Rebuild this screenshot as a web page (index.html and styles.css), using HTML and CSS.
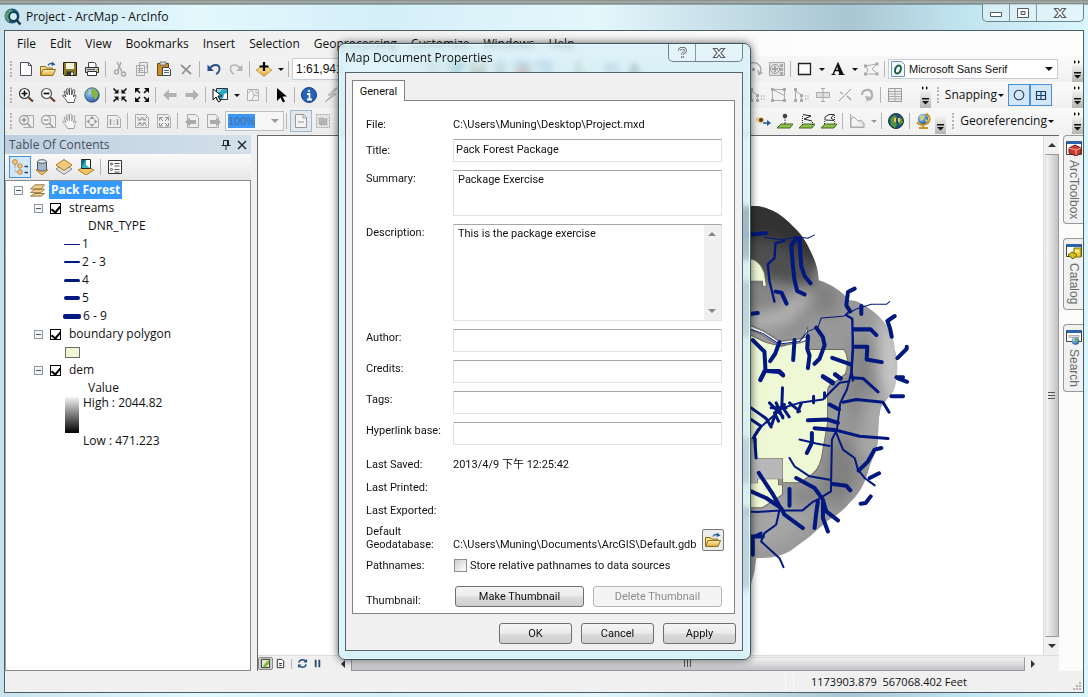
FILE: index.html
```html
<!DOCTYPE html>
<html lang="en">
<head>
<meta charset="utf-8">
<title>Project - ArcMap - ArcInfo</title>
<link rel="stylesheet" href="styles.css">
</head>
<body>
<svg class="sprite" aria-hidden="true">
  <defs>
    <linearGradient id="gold" x1="0" y1="0" x2="0" y2="1"><stop offset="0" stop-color="#fff0b0"/><stop offset="1" stop-color="#dfa93a"/></linearGradient>
    <radialGradient id="ocean" cx=".35" cy=".3" r=".8"><stop offset="0" stop-color="#a8d8ff"/><stop offset="1" stop-color="#1b4c9c"/></radialGradient>
  </defs>
  <symbol id="new" viewBox="0 0 16 16"><path d="M2.500 1.500h8l3 3v10h-11z" fill="#fff" stroke="#4a4f63"/><path d="M10.500 1.500v3h3" fill="none" stroke="#4a4f63"/></symbol>
  <symbol id="open" viewBox="0 0 16 16"><path d="M.5 14V5.500h5l1 1.500h6v2" fill="#f4dc82" stroke="#8b6d1b"/><path d="M.5 14.500l2.500-6h12.500l-2.500 6z" fill="url(#gold)" stroke="#8b6d1b"/><path d="M8 4.500c1-2 3-2.500 5-1.500" fill="none" stroke="#245f96" stroke-width="1.500"/><path d="M12 .5l3.500 3-4 1.500z" fill="#245f96"/></symbol>
  <symbol id="save" viewBox="0 0 16 16"><path d="M1.500 1.500h13v13h-12l-1-1z" fill="#8c7c28" stroke="#2a2508"/><path d="M4 2h8v6H4z" fill="#f3f1df"/><path d="M4.500 10.500h7v4h-7z" fill="#333"/><path d="M9 11.500h2v2.500H9z" fill="#eee"/></symbol>
  <symbol id="print" viewBox="0 0 16 16"><path d="M4.500 6V1.500h6l1.500 1.500v3" fill="#fff" stroke="#444"/><path d="M1.500 6.500h13v5h-13z" fill="#cfcfcf" stroke="#333"/><path d="M3.500 10.500h9v4h-9z" fill="#fff" stroke="#333"/><path d="M3 8.500h8" stroke="#555"/><path d="M12 8h1.500v1.500H12z" fill="#c9a400"/></symbol>
  <symbol id="cut" viewBox="0 0 16 16"><path d="M5 1l5 10M9 1L6 9" fill="none" stroke="#a9a9a9" stroke-width="1.500"/><circle cx="4.500" cy="11" r="2" fill="none" stroke="#a9a9a9" stroke-width="1.500"/><circle cx="11.500" cy="13" r="2" fill="none" stroke="#a9a9a9" stroke-width="1.500"/></symbol>
  <symbol id="copy" viewBox="0 0 16 16"><path d="M5.500 1.500h8v10h-8zM2.500 4.500h8v10h-8z" fill="#ececec" stroke="#a5a5a5"/><path d="M4 7.500h5M4 9.500h5M4 11.500h5M12 4.500h1M12 6.500h1" stroke="#a5a5a5"/></symbol>
  <symbol id="paste" viewBox="0 0 16 16"><path d="M1.500 2.500h11v12h-11z" fill="#c98d2b" stroke="#6d4811"/><path d="M4 1h6v3H4z" fill="#d9d9d9" stroke="#555" stroke-width=".7"/><path d="M6.500 6.500h6l2 2v6h-8z" fill="#fff" stroke="#345"/><path d="M8 9.500h5M8 11.500h5" stroke="#567"/></symbol>
  <symbol id="del" viewBox="0 0 16 16"><path d="M3 4l10 9M12.500 4L4 13" stroke="#8f8f8f" stroke-width="1.700"/></symbol>
  <symbol id="undo" viewBox="0 0 16 16"><path d="M4 7c3-4 9-4 9.500 0 .3 3-1.500 5-3.500 6" fill="none" stroke="#2b4d8b" stroke-width="1.800"/><path d="M1.500 3.500V10H8z" fill="#2b4d8b"/></symbol>
  <symbol id="redo" viewBox="0 0 16 16"><path d="M12 7c-3-4-9-4-9.500 0-.3 3 1.500 5 3.500 6" fill="none" stroke="#b5b5b5" stroke-width="1.500"/><path d="M14.500 3.500V10H8z" fill="#b5b5b5"/></symbol>
  <symbol id="add" viewBox="0 0 16 16"><path d="M0 9l8-5 8 5-8 6.500z" fill="url(#gold)" stroke="#b8812c" stroke-width=".7"/><path d="M8 1v9M3.500 5.500h9" stroke="#000" stroke-width="2.200"/></symbol>
  <symbol id="zin" viewBox="0 0 16 16"><circle cx="6.500" cy="6.500" r="5" fill="#fff" stroke="#333" stroke-width="1.200"/><path d="M3.500 6.500h6M6.500 3.500v6" stroke="#111" stroke-width="1.700"/><path d="M10.500 10.500l4.500 4" stroke="#6c3a22" stroke-width="2.200"/></symbol>
  <symbol id="zout" viewBox="0 0 16 16"><circle cx="6.500" cy="6.500" r="5" fill="#fff" stroke="#555" stroke-width="1.200"/><path d="M3.500 6.500h6" stroke="#111" stroke-width="1.700"/><path d="M10.500 10.500l4.500 4" stroke="#6c3a22" stroke-width="2.200"/></symbol>
  <symbol id="hand" viewBox="0 0 16 16"><path d="M5.500 15.500c-1-3-3.500-4.500-5-7 1-1 2.500 0 3.500 1.500L2 4.500c1-1 2 0 2.500 1.500l1 2-1-6c1-1 2 0 2.200 1l.8 5 0-6.500c1-1 2-.3 2.200 1v5.500l1.300-5c1-1 2 0 1.800 1.200l-1.300 5.800 1.500-2c1.500 0 1 1.500.5 2.500-1 1.500-1 3-1.500 5z" fill="#fff" stroke="#555"/></symbol>
  <symbol id="globe" viewBox="0 0 16 16"><circle cx="8" cy="8" r="7.300" fill="url(#ocean)" stroke="#1c3b66" stroke-width=".6"/><path d="M8 2c3-1 6 2 6.500 5-1 3-2 4-3 6-2-1-1-3-3-4-1.500-2-2-5-.5-7zM3 3l2 1-1 2-2 1z" fill="#86b43c"/></symbol>
  <symbol id="fixin" viewBox="0 0 16 16"><g stroke="#111" stroke-width="1.600"><path d="M1.500 1.500L5 5M14.500 1.500L11 5M1.500 14.500L5 11M14.500 14.500L11 11"/></g><path d="M6.500 2v4.500H2zM9.500 2v4.500H14zM6.500 14V9.500H2zM9.500 14V9.500H14z" fill="#111"/></symbol>
  <symbol id="fixout" viewBox="0 0 16 16"><g stroke="#111" stroke-width="1.600"><path d="M3 3l3 3M13 3l-3 3M3 13l3-3M13 13l-3-3"/></g><path d="M1 1h5L1 6zM15 1h-5l5 5zM1 15h5l-5-5zM15 15h-5l5-5z" fill="#111"/></symbol>
  <symbol id="left" viewBox="0 0 16 16"><path d="M1 8l6-5.500v3.500h7.500v4H7v3.500z" fill="#b2b2b2"/></symbol>
  <symbol id="right" viewBox="0 0 16 16"><path d="M15 8L9 2.500V6H1.500v4H9v3.500z" fill="#b2b2b2"/></symbol>
  <symbol id="selfeat" viewBox="0 0 16 16"><path d="M4.500 1.500h11v11h-11z" fill="#8fd6e6" stroke="#333"/><path d="M5 7l6-5h4v4l-5 6H5z" fill="#2ba9c4"/><path d="M12 7l3-1v6h-4z" fill="#f1f9fb"/><path d="M1 2v11l3-3 2.500 5 2-1-2.500-5h4z" fill="#fff" stroke="#111"/></symbol>
  <symbol id="clear" viewBox="0 0 16 16"><path d="M2.500 2.500h11v11h-11z" fill="#f3f3f3" stroke="#b1b1b1"/><path d="M3 6l4-3M7 3l2 5 4 1M9 8l-2 5M11 3v3h2" fill="none" stroke="#b1b1b1"/></symbol>
  <symbol id="arrow" viewBox="0 0 16 16"><path d="M4 1v13l3.500-3.500L10 15.500l2-1-2.500-5h4.500z" fill="#000"/></symbol>
  <symbol id="info" viewBox="0 0 16 16"><circle cx="8" cy="8" r="7.500" fill="#2463b8" stroke="#153f82"/><path d="M8 3v2M6 7h2.500v5M6 12.500h5" stroke="#fff" stroke-width="1.800" fill="none"/></symbol>
  <symbol id="bolt" viewBox="0 0 16 16"><path d="M13 1L5 8h4l-7 7 11-8H9l5-6z" fill="#ddd" stroke="#aaa"/></symbol>
  <symbol id="pgin" viewBox="0 0 16 16"><path d="M5.500 2.500h10v12h-10" fill="#eee" stroke="#a9a9a9"/><circle cx="6" cy="7" r="4.500" fill="#f5f5f5" stroke="#a2a2a2" stroke-width="1.300"/><path d="M3.500 7h5M6 4.500v5M9 10l4 4" stroke="#999" stroke-width="1.600"/></symbol>
  <symbol id="pgout" viewBox="0 0 16 16"><path d="M5.500 2.500h10v12h-10" fill="#eee" stroke="#a9a9a9"/><circle cx="6" cy="7" r="4.500" fill="#f5f5f5" stroke="#a2a2a2" stroke-width="1.300"/><path d="M3.500 7h5M9 10l4 4" stroke="#999" stroke-width="1.600"/></symbol>
  <symbol id="pgfull" viewBox="0 0 16 16"><path d="M1.500 2.500h10l3 3v9h-13z" fill="#eee" stroke="#a9a9a9"/><path d="M8 3l2.500 3h-5zM8 14l2.500-3h-5zM2.500 8.500l3-2.500v5zM13.500 8.500l-3-2.500v5z" fill="#999"/></symbol>
  <symbol id="pg1" viewBox="0 0 16 16"><path d="M1.500 2.500h10l3 3v9h-13z" fill="#eee" stroke="#a9a9a9"/><path d="M4.500 6v6M11.500 6v6M8 7.500v1M8 10.500v1" stroke="#999" stroke-width="1.400"/></symbol>
  <symbol id="pgfix" viewBox="0 0 16 16"><path d="M1.500 1.500h10l3 3v10h-13z" fill="#eee" stroke="#a9a9a9"/><path d="M3 4l3 3M13 4l-3 3M3 13l3-3M13 13l-3-3M4 7h3V4M12 7H9V4M4 10h3v3M12 10H9v3" fill="none" stroke="#8f8f8f"/></symbol>
  <symbol id="pgfix2" viewBox="0 0 16 16"><path d="M1.500 1.500h10l3 3v10h-13z" fill="#eee" stroke="#a9a9a9"/><path d="M4 5l3 3M12 5L9 8M4 13l3-3M12 13l-3-3M3.500 7.500v-3h3M12.500 7.500v-3h-3M3.500 10v3h3M12.500 10v3h-3" fill="none" stroke="#8f8f8f"/></symbol>
  <symbol id="pgleft" viewBox="0 0 16 16"><path d="M3.500 1.500h8l3 3v10h-11z" fill="#eee" stroke="#a9a9a9"/><path d="M1 9l5-4.500V7h6v4H6v2.500z" fill="#aaa"/></symbol>
  <symbol id="pgright" viewBox="0 0 16 16"><path d="M1.500 1.500h8l3 3v10h-11z" fill="#eee" stroke="#a9a9a9"/><path d="M15 9l-5-4.500V7H4v4h6v2.500z" fill="#aaa"/></symbol>
  <symbol id="pgdash" viewBox="0 0 16 16"><path d="M2.500 1.500h8l3 3v10h-11z" fill="#f4f4f4" stroke="#999"/><path d="M10 1.500v3.500h3.500M5 9h6" fill="none" stroke="#999"/></symbol>
  <symbol id="pggrid" viewBox="0 0 16 16"><path d="M1.500 1.500h13v13h-13z" fill="#e5e5e5" stroke="#a9a9a9" stroke-dasharray="2 1"/><path d="M4 5h5v6H4zM7 8l5-3v7H5z" fill="#bbb" stroke="#a5a5a5" stroke-width=".6"/></symbol>
  <symbol id="rot" viewBox="0 0 16 16"><path d="M2 3c4-3 11-1 12 5 0 2-1 4-2 5M11 9l1 4.500 3.500-2" fill="none" stroke="#a5a5a5" stroke-width="1.300"/><path d="M5 7h3v3H5z" fill="#aaa"/></symbol>
  <symbol id="center" viewBox="0 0 16 16"><path d="M.5 1.500h15v13H.5z" fill="#e3e3e3" stroke="#aaa"/><circle cx="6" cy="8" r="4.500" fill="none" stroke="#999"/><path d="M6 5v6M3 8h6" stroke="#999" stroke-width="1.500"/><path d="M11 3h3v3h-3zM11 7h3v3h-3zM11 11h3v3h-3z" fill="#aaa"/></symbol>
  <symbol id="rect" viewBox="0 0 16 16"><path d="M1.500 2.500h12v11h-12z" fill="#fafafa" stroke="#222" stroke-width="1.300"/></symbol>
  <symbol id="fontA" viewBox="0 0 16 16"><path d="M3 13.500L8 2.500l5 11M4.500 9.500h5" fill="none" stroke="#111" stroke-width="1.400"/><path d="M8 2l5 11.500h-3.500L7 5zM1.500 13h4v1h-4zM8.500 13h6v1h-6z" fill="#111"/></symbol>
  <symbol id="editv" viewBox="0 0 16 16"><path d="M2.500 5L14 3l-5 5 6 5H2.500L5 9z" fill="none" stroke="#aaa"/><path d="M1 3.500h3v3H1zM12.500 1.500h3v3h-3zM1 11.500h3v3H1zM12.500 11.500h3v3h-3z" fill="#aaa"/></symbol>
  <symbol id="fontO" viewBox="0 0 16 16"><path d="M1.500.5h10l3 3v12h-13z" fill="#f4f9ff" stroke="#6f8fbd"/><ellipse cx="8" cy="8.500" rx="2.700" ry="4.200" transform="rotate(22 8 8.500)" fill="none" stroke="#155f41" stroke-width="2"/></symbol>
  <symbol id="vert1" viewBox="0 0 16 16"><path d="M1.500 2.500v11h12v-5L1.500 2.500h12v6" fill="none" stroke="#aaa"/><path d="M0 1h3v3H0zM0 12h3v3H0zM12 12h3v3h-3zM12 1h3v3h-3z" fill="#aaa"/></symbol>
  <symbol id="vert2" viewBox="0 0 16 16"><path d="M2.500 2v12M2.500 4l6 4v6" fill="none" stroke="#aaa"/><path d="M1 1h3v3H1zM1 12h3v3H1zM7 7h3v3H7zM7 12h3v3H7z" fill="#aaa"/><path d="M12.500 8v6M15 8v6" stroke="#bbb" stroke-dasharray="2 1"/></symbol>
  <symbol id="cross1" viewBox="0 0 16 16"><path d="M1.500 5.500h13v5h-13zM8 1v14M6 1.500h4M6 14.500h4" fill="#e0e0e0" stroke="#aaa"/></symbol>
  <symbol id="cross2" viewBox="0 0 16 16"><path d="M2 14L14 2" stroke="#999"/><path d="M3 5l3 2M10 9l4 4" stroke="#aaa" stroke-width="1.500"/></symbol>
  <symbol id="rotate2" viewBox="0 0 16 16"><path d="M3 8c0-6 9-7 10-1 .5 3-1 5-3 6" fill="none" stroke="#b0b0b0" stroke-width="2.200"/><path d="M6 9l7 1-5 5z" fill="#b5b5b5"/></symbol>
  <symbol id="table" viewBox="0 0 16 16"><path d="M1.500 1.500h13v13h-13z" fill="#eee" stroke="#999"/><path d="M2 4.500h12M2 7h12M2 9.500h12M2 12h12M8 2v12" stroke="#aaa"/></symbol>
  <symbol id="ring" viewBox="0 0 16 16"><circle cx="8" cy="8" r="4.800" fill="none" stroke="#1f4468" stroke-width="1.100"/></symbol>
  <symbol id="gridico" viewBox="0 0 16 16"><path d="M3.500 4.500h9v8h-9zM8 4.500v8M3.500 8.500h9" fill="none" stroke="#183d66" stroke-width="1.200"/></symbol>
  <symbol id="eye" viewBox="0 0 16 16"><path d="M1 5l6-1 3 3-4 4-5-3z" fill="#ecc987"/><circle cx="6" cy="7" r="2" fill="#5a3a16"/><path d="M8 10h5" stroke="#1f5aa0" stroke-width="1.500"/><path d="M12 7l4 3-4 3z" fill="#1f5aa0"/></symbol>
  <symbol id="prof1" viewBox="0 0 16 16"><path d="M4 11h12l-3 4H0z" fill="#8fc04d" stroke="#466b1e"/><path d="M8 4v8" stroke="#333" stroke-dasharray="1.500 1"/><circle cx="8" cy="3" r="2.300" fill="#444"/></symbol>
  <symbol id="prof2" viewBox="0 0 16 16"><path d="M4 11h12l-3 4H0z" fill="#8fc04d" stroke="#466b1e"/><path d="M4 1.500L12 3 5 6l8 2" fill="none" stroke="#222"/><path d="M3.500 3v9M13.500 9v3" stroke="#222" stroke-dasharray="1 1"/></symbol>
  <symbol id="prof3" viewBox="0 0 16 16"><path d="M4 11h12l-3 4H0z" fill="#8fc04d" stroke="#466b1e"/><path d="M4 7V4l4-2.500h5L10 5l3 2.500z" fill="none" stroke="#333"/><path d="M3.500 8v4M13.500 2v10" stroke="#333" stroke-dasharray="1 1"/></symbol>
  <symbol id="area" viewBox="0 0 16 16"><path d="M1.500 1v13.500h14M2 6l3-2 4 4 3-1 3 3v4H2z" fill="#ddd" stroke="#aaa"/></symbol>
  <symbol id="earth" viewBox="0 0 16 16"><circle cx="8" cy="8" r="7.500" fill="#234f74" stroke="#16384f"/><path d="M2 6l4-4 3 2-2 4 2 3-2 4-4-3zM10 6l4-1 1 5-4 2z" fill="#55963d"/><path d="M6 5h2v4H6zM10 5h2v4h-2z" fill="#e8c85a"/></symbol>
  <symbol id="stand" viewBox="0 0 16 16"><circle cx="7" cy="6" r="5.200" fill="url(#ocean)"/><path d="M5 2l4 1-2 4-3 1zM9 6l3 1-2 3z" fill="#cdd76b"/><path d="M10 .5c6 4 4 11-3 11.500-3 0-5-1-6-3M7 12v2M3 15h9" fill="none" stroke="#c8901d" stroke-width="1.800"/></symbol>
  <symbol id="layers" viewBox="0 0 18 16"><path d="M1 15l5-3h11l-4 3zM1 11l5-4h11l-4 4zM1 7l5-5h11l-4 5z" fill="#efcd8c" stroke="#8d6e37"/></symbol>
  <symbol id="tree" viewBox="0 0 16 16"><path d="M3 4v9h5M3 7h5" fill="none" stroke="#999" stroke-dasharray="1 1"/><circle cx="3" cy="3" r="2.400" fill="#f1cd82" stroke="#b98738"/><circle cx="8" cy="7" r="2.200" fill="#f1cd82" stroke="#b98738"/><circle cx="8" cy="13" r="2.200" fill="#f1cd82" stroke="#b98738"/><path d="M12.500 7.500H16M12.500 13.500H16" stroke="#1c3d6d" stroke-width="1.500"/></symbol>
  <symbol id="source" viewBox="0 0 16 16"><path d="M2 11l6-3 6 3-6 5z" fill="#efc266" stroke="#b18028"/><path d="M3.500 2.500v8c1 2 8 2 9 0v-8z" fill="#a5b6c8" stroke="#4a5667"/><ellipse cx="8" cy="2.500" rx="4.500" ry="1.800" fill="#e6edf3" stroke="#4a5667"/></symbol>
  <symbol id="diamond" viewBox="0 0 16 16"><path d="M0 10l8-5 8 5-8 5.500z" fill="#ddd" stroke="#888"/><path d="M0 6l8-5.500L16 6l-8 5.500z" fill="#f1c979" stroke="#a8792f"/></symbol>
  <symbol id="selsrc" viewBox="0 0 16 16"><path d="M0 11l8-4 8 4-8 5z" fill="#efc266" stroke="#b18028"/><path d="M3.500.5h9v9h-9z" fill="#31b1cc" stroke="#222"/><path d="M8 1h4v8l-4-3z" fill="#fff"/><path d="M3 1v8l5-8z" fill="#176b83"/></symbol>
  <symbol id="opts" viewBox="0 0 16 16"><path d="M1.500 1.500h13v13h-13z" fill="#fff" stroke="#333"/><circle cx="4.500" cy="5" r="1" fill="none" stroke="#444"/><circle cx="4.500" cy="10.500" r="1" fill="none" stroke="#444"/><path d="M7.500 4.500h5M7.500 7h5M7.500 10.500h5M7.500 13h5" stroke="#555"/></symbol>
  <symbol id="pin" viewBox="0 0 10 10"><path d="M2.500.5h5v5h-5zM6.500 1v4M.5 5.500h9M5 6v4" fill="none" stroke="#222"/></symbol>
  <symbol id="x" viewBox="0 0 10 10"><path d="M1 1l8 8M9 1L1 9" stroke="#222" stroke-width="1.400"/></symbol>
  <symbol id="glassx" viewBox="0 0 14 12"><path d="M1.500 1.500h3.500l2 2.500 2-2.500h3.500L9 6l3.500 4.500H9L7 8l-2 2.500H1.500L5 6z" fill="#fff" stroke="#555b66" stroke-width="1.200"/></symbol>
  <symbol id="toolbox" viewBox="0 0 16 16"><path d="M.5 1.500h15v13H.5z" fill="#fff" stroke="#444"/><path d="M1 1h14v3H1z" fill="#2a62ad"/><path d="M3 8l6-3 6 3v5l-5 3-7-3z" fill="#c93b2c" stroke="#6d1710"/><path d="M3 8l7 2 5-2M10 10v5" fill="none" stroke="#f5aaa0"/></symbol>
  <symbol id="catalog" viewBox="0 0 16 16"><path d="M.5 1.500h15v12H.5z" fill="#fff" stroke="#444"/><path d="M1 1h14v3H1z" fill="#2a62ad"/><path d="M8 5h7v9H8z" fill="#ecd124" stroke="#7b6a0a"/><path d="M9 7h4v2H9z" fill="#fff7a6"/><path d="M2 12l4-3 5 3-4 4z" fill="#d9c11a" stroke="#6d5f07"/></symbol>
  <symbol id="search" viewBox="0 0 16 16"><path d="M.5 1.500h15v11H.5z" fill="#fff" stroke="#444"/><path d="M1 1h14v3H1z" fill="#2a62ad"/><path d="M3 6.500h10v2H3z" fill="#ddd" stroke="#888" stroke-width=".6"/><circle cx="9.500" cy="12" r="3.800" fill="url(#ocean)"/><path d="M9 9l3 1-1 4-2-2z" fill="#67b744"/></symbol>
  <symbol id="dataview" viewBox="0 0 12 12"><path d="M1.500 1.500h9v9h-9z" fill="#dfeecb" stroke="#222"/><path d="M3 9l5-6h2v3l-4 4z" fill="#83b343"/></symbol>
  <symbol id="layoutview" viewBox="0 0 12 12"><path d="M2.500 1.500h5l2 2v7h-7zM4.500 6h3M4.500 8h3" fill="#fff" stroke="#222"/></symbol>
  <symbol id="refresh" viewBox="0 0 12 12"><path d="M2 5c1-4 6-4 8-1M10 7c-1 4-6 4-8 1" fill="none" stroke="#1e4d86" stroke-width="1.500"/><path d="M11 1v4H7zM1 11V7h4z" fill="#1e4d86"/></symbol>
  <symbol id="pause" viewBox="0 0 12 12"><path d="M4 2v8M8 2v8" stroke="#2b4b78" stroke-width="2"/></symbol>
  <symbol id="chev" viewBox="0 0 9 20"><path d="M1 1l2 2-2 2zM5 1l2 2-2 2z" fill="#111"/><path d="M1 13h7v1.500H1zM1 16h7l-3.500 3.500z" fill="#111"/></symbol>
  <symbol id="chev1" viewBox="0 0 9 20"><path d="M1 13h7v1.500H1zM1 16h7l-3.500 3.500z" fill="#111"/></symbol>
</svg>

<div class="window">
  <header class="titlebar">
    <svg class="logo" viewBox="0 0 18 18"><circle cx="8" cy="8" r="7.500" fill="#1d5b78"/><path d="M1 5l5-4 3 2-3 4 1 5-3 2-3-4z" fill="#5a9c6f"/><circle cx="9.500" cy="8.500" r="4.300" fill="#d3eef5" stroke="#123a52" stroke-width="1.800"/><path d="M12.500 12l4 4.500" stroke="#123a52" stroke-width="2.500"/></svg>
    <h1 class="title">Project - ArcMap - ArcInfo</h1>
    <div class="caption-buttons">
      <button class="cap" aria-label="Minimize"><svg viewBox="0 0 14 12"><path d="M1.500 5.500h11v4h-11z" fill="#fff" stroke="#555b66"/></svg></button>
      <button class="cap" aria-label="Maximize"><svg viewBox="0 0 14 12"><path d="M1.500 1.500h11v9h-11z" fill="#fff" stroke="#555b66"/><path d="M5 4.500h4v3H5z" fill="#cfe4ee" stroke="#555b66"/></svg></button>
      <button class="cap cap-close" aria-label="Close"><svg><use href="#glassx"/></svg></button>
    </div>
  </header>

  <div class="client">
    <nav class="menubar">
      <button>File</button><button>Edit</button><button>View</button><button>Bookmarks</button><button>Insert</button><button>Selection</button><button>Geoprocessing</button><button>Customize</button><button>Windows</button><button>Help</button>
    </nav>

    <div class="toolbars">
      <div class="toolrow">
        <i class="grip"></i>
        <button class="tool" aria-label="New"><svg><use href="#new"/></svg></button>
        <button class="tool" aria-label="Open"><svg><use href="#open"/></svg></button>
        <button class="tool" aria-label="Save"><svg><use href="#save"/></svg></button>
        <button class="tool" aria-label="Print"><svg><use href="#print"/></svg></button>
        <i class="sep"></i>
        <button class="tool" aria-label="Cut"><svg><use href="#cut"/></svg></button>
        <button class="tool" aria-label="Copy"><svg><use href="#copy"/></svg></button>
        <button class="tool" aria-label="Paste"><svg><use href="#paste"/></svg></button>
        <button class="tool" aria-label="Delete"><svg><use href="#del"/></svg></button>
        <i class="sep"></i>
        <button class="tool" aria-label="Undo"><svg><use href="#undo"/></svg></button>
        <button class="tool" aria-label="Redo"><svg><use href="#redo"/></svg></button>
        <i class="sep"></i>
        <button class="tool" aria-label="Add data"><svg><use href="#add"/></svg></button>
        <button class="drop" aria-label="Add data options"></button>
        <i class="sep"></i>
        <input class="scale" aria-label="Map scale" value="1:61,941">
        <span class="mid">
          <svg><use href="#table"/></svg><svg><use href="#selfeat"/></svg><svg><use href="#save"/></svg><svg><use href="#source"/></svg><svg><use href="#toolbox"/></svg><svg><use href="#search"/></svg><i class="sep"></i><svg><use href="#prof1"/></svg><i class="sep"></i><svg><use href="#undo"/></svg><svg><use href="#fontA"/></svg>
        </span>
        <span class="right">
          <button class="tool" aria-label="Rotate"><svg><use href="#rot"/></svg></button>
          <button class="tool" aria-label="Zoom to selected"><svg><use href="#center"/></svg></button>
          <i class="sep"></i>
          <button class="tool" aria-label="Rectangle"><svg><use href="#rect"/></svg></button>
          <button class="drop" aria-label="Shapes"></button>
          <button class="tool" aria-label="Text"><svg><use href="#fontA"/></svg></button>
          <button class="drop" aria-label="Text tools"></button>
          <button class="tool" aria-label="Edit vertices"><svg><use href="#editv"/></svg></button>
          <i class="sep"></i>
          <span class="fontbox"><svg><use href="#fontO"/></svg><select aria-label="Font"><option>Microsoft Sans Serif</option></select><i class="caret"></i></span>
          <i class="tail"></i>
          <button class="more" aria-label="More"><svg><use href="#chev"/></svg></button>
        </span>
      </div>
      <div class="toolrow">
        <i class="grip"></i>
        <button class="tool" aria-label="Zoom in"><svg><use href="#zin"/></svg></button>
        <button class="tool" aria-label="Zoom out"><svg><use href="#zout"/></svg></button>
        <button class="tool" aria-label="Pan"><svg><use href="#hand"/></svg></button>
        <button class="tool" aria-label="Full extent"><svg><use href="#globe"/></svg></button>
        <i class="sep"></i>
        <button class="tool" aria-label="Fixed zoom in"><svg><use href="#fixin"/></svg></button>
        <button class="tool" aria-label="Fixed zoom out"><svg><use href="#fixout"/></svg></button>
        <i class="sep"></i>
        <button class="tool" aria-label="Back"><svg><use href="#left"/></svg></button>
        <button class="tool" aria-label="Forward"><svg><use href="#right"/></svg></button>
        <i class="sep"></i>
        <button class="tool" aria-label="Select features"><svg><use href="#selfeat"/></svg></button>
        <button class="drop" aria-label="Select options"></button>
        <button class="tool" aria-label="Clear selection"><svg><use href="#clear"/></svg></button>
        <i class="sep"></i>
        <button class="tool" aria-label="Select elements"><svg><use href="#arrow"/></svg></button>
        <i class="sep"></i>
        <button class="tool" aria-label="Identify"><svg><use href="#info"/></svg></button>
        <button class="tool" aria-label="Hyperlink"><svg><use href="#bolt"/></svg></button>
        <span class="right">
          <button class="tool" aria-label="Edit tool"><svg><use href="#vert2"/></svg></button>
          <button class="tool" aria-label="Edit shape"><svg><use href="#vert1"/></svg></button>
          <button class="tool" aria-label="Reshape"><svg><use href="#vert2"/></svg></button>
          <button class="tool" aria-label="Cut polygons"><svg><use href="#cross1"/></svg></button>
          <button class="tool" aria-label="Split"><svg><use href="#cross2"/></svg></button>
          <button class="tool" aria-label="Rotate feature"><svg><use href="#rotate2"/></svg></button>
          <i class="sep"></i>
          <button class="tool" aria-label="Attributes"><svg><use href="#table"/></svg></button>
          <i class="tail"></i>
          <button class="more" aria-label="More"><svg><use href="#chev"/></svg></button>
          <i class="grip"></i>
          <button class="textmenu">Snapping<i class="caret"></i></button>
          <button class="tool on" aria-label="Point snapping"><svg><use href="#ring"/></svg></button>
          <button class="tool on" aria-label="Grid snapping"><svg><use href="#gridico"/></svg></button>
          <i class="tail long"></i>
          <button class="more" aria-label="More"><svg><use href="#chev"/></svg></button>
        </span>
      </div>
      <div class="toolrow">
        <i class="grip"></i>
        <button class="tool" aria-label="Page zoom in"><svg><use href="#pgin"/></svg></button>
        <button class="tool" aria-label="Page zoom out"><svg><use href="#pgout"/></svg></button>
        <button class="tool dim" aria-label="Page pan"><svg><use href="#hand"/></svg></button>
        <button class="tool" aria-label="Whole page"><svg><use href="#pgfull"/></svg></button>
        <button class="tool" aria-label="Actual size"><svg><use href="#pg1"/></svg></button>
        <i class="sep"></i>
        <button class="tool" aria-label="Page fixed zoom in"><svg><use href="#pgfix"/></svg></button>
        <button class="tool" aria-label="Page fixed zoom out"><svg><use href="#pgfix2"/></svg></button>
        <i class="sep"></i>
        <button class="tool" aria-label="Page back"><svg><use href="#pgleft"/></svg></button>
        <button class="tool" aria-label="Page forward"><svg><use href="#pgright"/></svg></button>
        <span class="pct"><input aria-label="Page zoom" value="100%" disabled><i class="caret"></i></span>
        <i class="sep"></i>
        <button class="tool held" aria-label="Draft mode"><svg><use href="#pgdash"/></svg></button>
        <button class="tool" aria-label="Focus data frame"><svg><use href="#pggrid"/></svg></button>
        <span class="right">
          <button class="tool" aria-label="Line of sight"><svg><use href="#eye"/></svg></button>
          <button class="tool" aria-label="Interpolate point"><svg><use href="#prof1"/></svg></button>
          <button class="tool" aria-label="Interpolate line"><svg><use href="#prof2"/></svg></button>
          <button class="tool" aria-label="Interpolate polygon"><svg><use href="#prof3"/></svg></button>
          <i class="sep"></i>
          <button class="tool" aria-label="Profile graph"><svg><use href="#area"/></svg></button>
          <button class="drop off" aria-label="Profile options"></button>
          <i class="sep"></i>
          <button class="tool" aria-label="ArcScene"><svg><use href="#earth"/></svg></button>
          <i class="sep"></i>
          <button class="tool" aria-label="ArcGlobe"><svg><use href="#stand"/></svg></button>
          <button class="more" aria-label="More"><svg><use href="#chev1"/></svg></button>
          <i class="grip"></i>
          <button class="textmenu">Georeferencing<i class="caret"></i></button>
          <i class="tail"></i>
          <button class="more" aria-label="More"><svg><use href="#chev"/></svg></button>
        </span>
      </div>
    </div>

    <main class="workspace">
      <section class="toc">
        <header class="toc-head"><h2>Table Of Contents</h2><button aria-label="Pin"><svg><use href="#pin"/></svg></button><button aria-label="Close panel"><svg><use href="#x"/></svg></button></header>
        <div class="toc-tools">
          <button class="tool on" aria-label="List by drawing order"><svg><use href="#tree"/></svg></button>
          <button class="tool" aria-label="List by source"><svg><use href="#source"/></svg></button>
          <button class="tool" aria-label="List by visibility"><svg><use href="#diamond"/></svg></button>
          <button class="tool" aria-label="List by selection"><svg><use href="#selsrc"/></svg></button>
          <i class="sep"></i>
          <button class="tool" aria-label="Options"><svg><use href="#opts"/></svg></button>
        </div>
        <div class="layers">
          <div class="node root"><i class="toggle"></i><svg class="frame-icon"><use href="#layers"/></svg><b>Pack Forest</b></div>
          <div class="node"><i class="toggle"></i><input type="checkbox" id="l1" checked><label for="l1">streams</label></div>
          <div class="heading">DNR_TYPE</div>
          <div class="class"><i class="line w1"></i>1</div>
          <div class="class"><i class="line w2"></i>2 - 3</div>
          <div class="class"><i class="line w3"></i>4</div>
          <div class="class"><i class="line w4"></i>5</div>
          <div class="class"><i class="line w5"></i>6 - 9</div>
          <div class="node"><i class="toggle"></i><input type="checkbox" id="l2" checked><label for="l2">boundary polygon</label></div>
          <div class="class"><i class="patch"></i></div>
          <div class="node"><i class="toggle"></i><input type="checkbox" id="l3" checked><label for="l3">dem</label></div>
          <div class="heading">Value</div>
          <div class="ramp"><i></i><div><span>High : 2044.82</span><span>Low : 471.223</span></div></div>
        </div>
      </section>

      <section class="mapview">
        <div class="mapwrap">
          <svg class="map" viewBox="258 137 785 518" preserveAspectRatio="xMaxYMin slice" role="img" aria-label="Pack Forest map">
            <defs>
              <clipPath id="demclip"><path d="M600 207H752C764 206 777 212 786 220C797 230 803 236 808 246C814 258 819 268 819 281C830 284 842 292 850 301C860 301 870 309 878 316C888 326 894 336 895 350C899 362 898 378 894 391L881 408L879 420L878 443C877 452 872 460 869 470C866 482 860 494 850 503C844 511 835 517 828 521L810 537L791 551C782 556 772 559 757 558L755 572L750 590H600z"/></clipPath>
              <filter id="soft" x="-50%" y="-50%" width="200%" height="200%"><feGaussianBlur stdDeviation="7"/></filter>
            </defs>
            <g clip-path="url(#demclip)">
              <path d="M600 200h310v400H600z" fill="#999"/>
              <g filter="url(#soft)">
                <path d="M700 180h140v75l-30 15-110-15z" fill="#303030"/>
                <path d="M700 245l70-5 50 25-10 25-110-20z" fill="#505050"/>
                <path d="M745 285l50 5 20 20-20 25-50-5z" fill="#858585"/>
                <path d="M752 315l30-5 20-20 8 10-20 25-38 5z" fill="#b5b5b5"/>
                <path d="M812 275l30 15-8 30-20-10z" fill="#808080"/>
                <path d="M880 310l20 30 5 50-15 25-10-40z" fill="#c8c8c8"/>
                <path d="M855 335l20 10 5 60-20 30-15-40z" fill="#858585"/>
                <path d="M865 395l25 10-10 60-20-15z" fill="#a9a9a9"/>
                <path d="M830 440l20-5 10 40-20 35-20-20z" fill="#808080"/>
                <path d="M760 500l40-5 20 15-30 30-40 10z" fill="#a5a5a5"/>
                <path d="M790 490l30 0 5 10-30 10z" fill="#838383"/>
              </g>
            </g>
            <g fill="#eff8d5" stroke="#6f6f66" stroke-width="1">
              <path d="M600 260h153c6 2 10 8 12 14l2 13h-4v-5H600z"/>
              <path d="M600 336h152l14 7 16 4 20-6 6-14v23h36c4 4 5 14 2 24l-8 7c-6 2-10 6-10 10v32l-6 35c-2 9-7 16-13 19l-9 6h-17v-24h-26v-20H600z"/>
              <path d="M600 483h158v-4h21v6h4v10l-20 13H600z"/>
            </g>
            <path d="M757 459h26v20h-25v4h-6v-40h5z" fill="#b8b8b8"/>
            <g fill="none" stroke="#00187f" stroke-linecap="round" stroke-linejoin="round">
              <g transform="translate(740 130) scale(.333333)">
                <path d="M35 595l35 15 50 32 60-8 25-7" stroke="#777" stroke-width="16"/><path d="M35 595l35 15 50 32 60-8 25-7" stroke="#fff" stroke-width="7"/>
                <g stroke-width="3"><path d="M35 600l35 12 50 32 60-8 25-30 30-12 10-28 65-5 40-22 45-14h45l10-8M75 325l40 5h25l30-8 35 5 20-10M315 558l15-15"/></g>
                <g stroke-width="7"><path d="M135 335l-27 7-3 45-20 18 5 50 15 62M320 558l18 10 2 95-5 60 5 30"/></g>
                <g stroke-width="12"><path d="M10 320l30-5 40-3M170 328l-15 20 5 60 5 45 8 32 22 10M180 330l5 80 10 30 18 22M108 487l18 3 15 33M345 478l-20 10-5 40 12 18M365 530v24M465 560l-22 15 8 22 5 25M343 600h50l17 17M343 652h40l-2 38 45 8M473 686l28-28v-6M278 685l55 20M230 595l20 28 5 25-15 40-15 15M205 620l-2 38 7 20-5 38M165 632l-4 60M120 638l-13 35-15 22M40 632l35 35 3 55-15 30M82 725l37 3 12 10M35 553l20-2M250 740l30 18M286 735l18 12M470 743h20"/></g>
              </g>
              <g transform="translate(740 340) scale(.333333)">
                <g stroke-width="6"><path d="M340 0l-3 90-15 60-20 40-10 80-15 30-3 155-35 22-20 10-30 25-70 0-65 5-60-3-35-25M290 280l20 50 35 25 10 35 20 25 30 22M40 295l15-25 75-65 50-15 70-10 50-50 30-5M120 510l-10 45-35 25-10 25 55 50 12 27M150 355l15 25 45 30 60 10M180 300l50 12 40 7"/></g>
                <g stroke-width="9"><path d="M335 115l35 2 45 40M310 188l40-8 60 6 20 2 18 30M290 272l70 18 85 7M35 205l45 32 15 25M35 240l30 20-20 30 5 65M90 190l40 40M135 195l-30 25 12 25M110 190l20 45M95 205h45M129 145l-2 55 22 32M150 190l30 25M185 192l-10 25M105 230l-8 25M222 170v20M255 160v15M35 595l30-15"/></g>
                <g stroke-width="12"><path d="M63 120l12-25h45l10 10M250 112l30 20M288 105l14 12M475 117l27 10M455 170h35M270 195l28 15M205 242l60-2 30 10M225 266l60 5M217 280v30l-15 30M425 325l-20 5-20 35-28 28M390 415l28-14M280 433l40 5 12 14M393 470l-15 20-15 2M170 415l55 30 25 35 10 35 35 27M250 490v45l15 40M235 485l-5 35-5 45M35 455l45 20 45 30 10 20 55 40M58 400l40 60 25 45M150 448v50M35 590h35M40 600v45"/></g>
              </g>
            </g>
          </svg>
          <div class="vscroll"><i class="up"></i><span></span><i class="down"></i></div>
        </div>
        <div class="mapbar">
          <button class="mini active" aria-label="Data view"><svg><use href="#dataview"/></svg></button>
          <button class="mini" aria-label="Layout view"><svg><use href="#layoutview"/></svg></button>
          <i class="sep"></i>
          <button class="mini" aria-label="Refresh"><svg><use href="#refresh"/></svg></button>
          <button class="mini" aria-label="Pause drawing"><svg><use href="#pause"/></svg></button>
          <div class="hscroll"><i class="lt"></i><span></span><i class="rt"></i></div>
        </div>
      </section>

      <aside class="docks">
        <button class="dock"><svg><use href="#toolbox"/></svg><span>ArcToolbox</span></button>
        <button class="dock"><svg><use href="#catalog"/></svg><span>Catalog</span></button>
        <button class="dock"><svg><use href="#search"/></svg><span>Search</span></button>
      </aside>
    </main>

    <footer class="status"><i></i><span>1173903.879&nbsp; 567068.402 Feet</span><svg viewBox="0 0 12 12"><path d="M8 2h2v2H8zM8 5h2v2H8zM5 5h2v2H5zM8 8h2v2H8zM5 8h2v2H5zM2 8h2v2H2z" fill="#b3b3b3"/></svg></footer>
  </div>
</div>

<form class="dialog" role="dialog" aria-labelledby="dlg-title">
  <header class="dialog-head">
    <h2 id="dlg-title">Map Document Properties</h2>
    <div class="dialog-caps">
      <button type="button" class="cap" aria-label="Help"><svg viewBox="0 0 14 14"><path d="M4 4.500c0-4 7-4 7-.5 0 2.500-3.500 2.500-3.500 5M7.500 10.800v2" fill="none" stroke="#555b66" stroke-width="3.200"/><path d="M4 4.500c0-4 7-4 7-.5 0 2.500-3.500 2.500-3.500 5M7.500 11v1.500" fill="none" stroke="#fff" stroke-width="1.300"/></svg></button>
      <button type="button" class="cap cap-close" aria-label="Close dialog"><svg><use href="#glassx"/></svg></button>
    </div>
  </header>
  <div class="dialog-body">
    <div class="tabs"><button type="button" class="tab">General</button></div>
    <div class="page">
      <div class="row first"><span class="lab">File:</span><span>C:\Users\Muning\Desktop\Project.mxd</span></div>
      <div class="row mid-row"><label class="lab" for="f-title">Title:</label><input id="f-title" class="field titlef" value="Pack Forest Package"></div>
      <div class="row"><label class="lab" for="f-sum">Summary:</label><textarea id="f-sum" class="field sum">Package Exercise</textarea></div>
      <div class="row"><label class="lab" for="f-desc">Description:</label><div class="field desc"><textarea id="f-desc">This is the package exercise</textarea><div class="dscroll"><i class="up"></i><i class="down"></i></div></div></div>
      <div class="row"><label class="lab" for="f-auth">Author:</label><input id="f-auth" class="field"></div>
      <div class="row"><label class="lab" for="f-cred">Credits:</label><input id="f-cred" class="field"></div>
      <div class="row"><label class="lab" for="f-tags">Tags:</label><input id="f-tags" class="field"></div>
      <div class="row"><label class="lab" for="f-hyp">Hyperlink base:</label><input id="f-hyp" class="field"></div>
      <div class="facts">
        <div class="row"><span class="lab">Last Saved:</span><span>2013/4/9 下午 12:25:42</span></div>
        <div class="row"><span class="lab">Last Printed:</span></div>
        <div class="row"><span class="lab">Last Exported:</span></div>
      </div>
      <div class="row gdb"><span class="lab">Default Geodatabase:</span><span class="path">C:\Users\Muning\Documents\ArcGIS\Default.gdb</span><button type="button" class="browse" aria-label="Browse"><svg><use href="#open"/></svg></button></div>
      <div class="row mid-row paths"><span class="lab">Pathnames:</span><input type="checkbox" id="f-rel"><label for="f-rel">Store relative pathnames to data sources</label></div>
      <div class="row thumbs"><span class="lab">Thumbnail:</span><button type="button" class="btn">Make Thumbnail</button><button type="button" class="btn" disabled>Delete Thumbnail</button></div>
    </div>
    <div class="actions"><button type="button" class="btn">OK</button><button type="button" class="btn">Cancel</button><button type="button" class="btn">Apply</button></div>
  </div>
</form>
</body>
</html>
```
FILE: styles.css
```css
* { box-sizing: border-box; }
html, body { height: 100%; }
body {
  margin: 0;
  font: 12px/16px "Open Sans", "Noto Sans", sans-serif;
  color: #111;
  overflow: hidden;
}
h1, h2 { margin: 0; font-weight: 400; }
button { font: inherit; color: inherit; padding: 0; border: 0; background: none; }
input, select, textarea { font: inherit; color: inherit; margin: 0; }
i { display: block; flex: none; }
svg { display: block; flex: none; width: 16px; height: 16px; }
.sprite { position: absolute; width: 0; height: 0; }

/* main window */
.window {
  display: flex;
  flex-direction: column;
  height: 100%;
  padding: 4px 4px 4px;
  background:
    linear-gradient(#8d8f86, #a9b2b0 3px, #566 4px, transparent 5px),
    linear-gradient(90deg, #c9e3ee 0, #e2f8fd 18%, #d5eff7 35%, #e3f7fc 55%, #a9c6d2 78%, #bfe3ee 88%, #d9f6fc);
}
.titlebar { display: flex; align-items: center; height: 26px; flex: none; }
.logo { width: 18px; height: 18px; margin-right: 4px; }
.title { font-size: 12px; line-height: 20px; flex: 1; }
.caption-buttons, .dialog-caps {
  display: flex;
  align-self: flex-start;
  border: 1px solid #6f848e;
  border-top: 0;
  border-radius: 0 0 5px 5px;
  background: rgba(235, 246, 250, .5);
}
.cap { display: grid; place-items: center; width: 27px; height: 17px; border-right: 1px solid #8498a2; }
.cap svg { width: 14px; height: 12px; }
.cap-close { width: 46px; border-right: 0; }
.client {
  display: flex;
  flex-direction: column;
  flex: 1;
  min-height: 0;
  border: 1px solid #4d5d66;
  background: #f0f0f0;
}
.menubar { display: flex; height: 25px; padding-left: 5px; flex: none; background: linear-gradient(90deg, #efefef, #f2f2f2 40%, #fdfdfd 75%); }
.menubar button { padding: 0 7px; white-space: nowrap; line-height: 12px; }

/* toolbars */
.toolbars { flex: none; background: linear-gradient(90deg, #f0f0f0, #f5f5f5 60%, #fafafa); }
.toolrow { display: flex; align-items: center; height: 26px; padding-left: 5px; background: linear-gradient(transparent, rgba(225, 225, 225, .35)); }
.grip { width: 5px; height: 16px; border-left: 2px dotted #b5b5b5; }
.tool { display: grid; place-items: center; width: 22px; height: 22px; flex: none; }
.tool.on { border: 1px solid #4a90d9; background: #d4e7f8; }
.tool.held { border: 1px solid #9fb6cf; background: #e2e8ee; }
.tool.dim { opacity: .5; }
.sep { width: 1px; height: 16px; margin: 0 3px 0 2px; background: #b4b4b4; }
.drop { width: 11px; height: 20px; display: grid; place-items: center; }
.drop::after, .caret { content: ""; width: 0; height: 0; border: 4px solid transparent; border-top-color: #111; border-bottom: 0; flex: none; }
.drop::after { border-width: 3px; border-bottom: 0; }
.drop.off::after { border-top-color: #999; }
.scale { width: 110px; height: 22px; border: 1px solid #c5cdd6; background: #fff; padding: 0 3px; font: 12px "Liberation Sans", sans-serif; }
.mid { display: flex; gap: 6px; margin-left: 24px; align-items: center; }
.right { display: flex; align-items: center; height: 100%; margin-left: auto; }
.fontbox { display: flex; align-items: center; width: 170px; height: 20px; border: 1px solid #c5cdd6; background: #fff; padding: 0 4px 0 1px; }
.fontbox select { appearance: none; flex: 1; min-width: 0; border: 0; background: none; padding: 0 3px; font: 11px "Liberation Sans", sans-serif; }
.tail { width: 14px; }
.tail.long { width: 20px; }
.more { width: 11px; height: 26px; margin-right: 6px; background: linear-gradient(transparent 30%, #b5b5b5); display: grid; place-items: center; }
.more svg { width: 9px; height: 20px; }
.right > .more:last-child { margin-right: 0; }
.textmenu { display: flex; align-items: center; gap: 1px; padding: 0 4px 0 3px; white-space: nowrap; }
.textmenu .caret { border-width: 3px; border-bottom: 0; }
.pct { display: flex; align-items: center; width: 59px; height: 20px; border: 1px solid #b9c0c8; background: #f6f6f6; padding: 0 4px 0 2px; }
.pct input { width: 27px; height: 14px; border: 0; padding: 0; margin-right: auto; background: #3c96f5; color: #44709c; font: 11px "Liberation Sans", sans-serif; }
.pct .caret { border-top-color: #999; }

/* workspace */
.workspace { display: flex; flex: 1; min-height: 0; padding-top: 1px; }
.toc { display: flex; flex-direction: column; width: 246px; flex: none; margin-right: 6px; }
.toc-head { display: flex; align-items: center; gap: 6px; height: 19px; padding: 0 4px; background: linear-gradient(90deg, #bfcfdf, #d3e0eb); color: #45505c; flex: none; }
.toc-head h2 { flex: 1; font-size: 12px; line-height: 16px; }
.toc-head svg { width: 10px; height: 10px; }
.toc-tools { display: flex; align-items: center; height: 26px; padding-left: 4px; background: linear-gradient(#fafafa, #e7e7e7); flex: none; }
.toc-tools .sep { margin: 0 3px; }
.layers { flex: 1; border: 1px solid #85888d; border-left-color: #aaa; background: #fff; line-height: 18px; }
.node, .class { display: flex; align-items: center; height: 18px; padding-left: 28px; }
.root { padding-left: 8px; }
.root b { background: #3399ff; color: #fff; padding: 0 2px; margin-left: 3px; font-weight: 700; white-space: nowrap; }
.frame-icon { width: 17px; height: 14px; margin-left: 6px; }
.toggle { width: 9px; height: 9px; border: 1px solid #8e98a5; background: linear-gradient(#456, #456) 1px 3px / 5px 1px no-repeat #f6f6f6; }
.node input { appearance: none; width: 11px; height: 11px; margin: 0 8px 0 7px; border: 1px solid #000; background: #fff; position: relative; }
.node input:checked::after { content: ""; position: absolute; left: 2px; top: 0; width: 4px; height: 7px; border: solid #000; border-width: 0 2px 2px 0; transform: rotate(40deg); }
.heading { padding-left: 82px; height: 18px; }
.class { padding-left: 57px; gap: 2px; }
.line { width: 16px; margin-left: 1px; background: #00187f; border-radius: 2px; }
.w1 { height: 1px; }
.w2 { height: 2px; }
.w3 { height: 3px; }
.w4 { height: 4px; }
.w5 { height: 5px; width: 18px; margin-left: 0; }
.patch { width: 15px; height: 11px; margin-left: 2px; border: 1px solid #6e6e64; background: #eff8d5; }
.ramp { display: flex; gap: 4px; padding-left: 59px; height: 52px; }
.ramp i { width: 14px; height: 36px; background: linear-gradient(#f4f4f4, #000); }
.ramp div { display: flex; flex-direction: column; justify-content: space-between; line-height: 16px; margin-top: -2px; }

.mapview { display: flex; flex-direction: column; flex: 1; min-width: 0; border-left: 1px solid #666; border-top: 1px solid #666; }
.mapwrap { display: flex; flex: 1; min-height: 0; background: #fff; }
.map { flex: 1; min-width: 0; width: auto; height: 100%; }
.vscroll { display: flex; flex-direction: column; align-items: center; width: 16px; background: #f0f0f0; border-left: 1px solid #ddd; }
.vscroll span { flex: 1; width: 14px; border: 1px solid #999; border-left-color: #ddd; background: repeating-linear-gradient(#555 0 1px, transparent 1px 3px) 50% 50% / 7px 8px no-repeat, linear-gradient(90deg, #f5f5f5, #c2c2c6); }
.up, .down { width: 16px; height: 18px; display: grid; place-items: center; }
.up::after, .down::after { content: ""; border: 4px solid transparent; border-bottom-color: #333; border-top: 0; }
.down::after { border: 4px solid transparent; border-top-color: #333; border-bottom: 0; }
.mapbar { display: flex; align-items: center; height: 16px; flex: none; background: #f0f0f0; border-top: 1px solid #ddd; }
.mini { width: 15px; height: 13px; display: grid; place-items: center; }
.mini svg { width: 11px; height: 11px; }
.mini.active { border: 1px solid #888; border-radius: 2px; background: #d5d5d5; }
.mapbar .sep { height: 10px; margin: 0 3px; }
.hscroll { display: flex; align-items: center; flex: 1; height: 14px; margin: 0 18px 0 10px; }
.hscroll span { flex: 1; height: 14px; border: 1px solid #999; border-top-color: #ddd; background: repeating-linear-gradient(90deg, #555 0 1px, transparent 1px 3px) 50% 50% / 8px 7px no-repeat, linear-gradient(#f2f2f2, #c2c2c6); }
.lt, .rt { width: 16px; display: grid; place-items: center; }
.lt::after, .rt::after { content: ""; border: 4px solid transparent; border-right-color: #333; border-left: 0; }
.rt::after { border: 4px solid transparent; border-left-color: #333; border-right: 0; }

.docks { display: flex; flex-direction: column; align-items: flex-end; gap: 14px; width: 24px; flex: none; background: #fbfbfb; }
.dock { display: flex; flex-direction: column; align-items: center; gap: 4px; width: 20px; padding: 4px 0; border: 1px solid #999; border-right: 0; border-radius: 4px 0 0 4px; background: #f1f1f1; color: #6a6a6a; font: 12px/16px "Liberation Sans", sans-serif; }
.dock span { writing-mode: vertical-rl; }
.status { display: flex; align-items: center; justify-content: flex-end; height: 21px; flex: none; font-size: 11px; }
.status > i { width: 9px; height: 16px; border: solid #fbfbfb; border-width: 0 1px; margin-right: 17px; }
.status span { width: 253px; }
.status svg { width: 12px; height: 12px; align-self: flex-end; margin-left: 7px; }

/* properties dialog */
.dialog {
  position: absolute;
  left: 338px;
  top: 43px;
  width: 413px;
  padding: 0 7px 8px 6px;
  border: 1px solid #3d545e;
  border-radius: 7px;
  background: linear-gradient(rgba(210, 240, 249, .72), rgba(203, 239, 249, .7));
  backdrop-filter: blur(3px);
  box-shadow: inset 0 0 0 1px #e6fbff, 0 0 8px rgba(0, 0, 0, .65);
  font: 11px/13px Roboto, "Noto Sans CJK TC", sans-serif;
}
.dialog-head { display: flex; justify-content: space-between; height: 28px; }
.dialog-head h2 { font: 12px/12px "Open Sans", sans-serif; padding-top: 8px; }
.dialog-body { border: 1px solid #56656d; background: #f0f0f0; padding: 7px 7px 6px 6px; }
.tabs { height: 20px; }
.tab { position: relative; width: 53px; height: 21px; border: 1px solid #7f858b; border-bottom: 0; background: #fff; }
.page { display: flex; flex-direction: column; gap: 8px; border: 1px solid #7f858b; background: #fff; padding: 17px 12px 6px 13px; }
.row { display: flex; align-items: flex-start; }
.lab { width: 87px; flex: none; padding-top: 2px; }
.first .lab, .facts .lab, .gdb .lab { padding-top: 0; }
.mid-row { align-items: center; }
.mid-row .lab { padding-top: 0; }
.field { flex: 1; min-width: 0; height: 23px; padding: 0 3px; border: 1px solid #dfe1e6; border-top-color: #a5a7ad; border-radius: 1px; background: #fff; resize: none; }
.titlef { padding-bottom: 2px; padding-left: 2px; }
.sum { height: 46px; padding: 2px 4px; overflow: hidden; }
.desc { display: flex; height: 97px; padding: 0; }
.desc textarea { flex: 1; min-width: 0; border: 0; padding: 2px 4px; resize: none; overflow: hidden; background: none; }
.dscroll { display: flex; flex-direction: column; justify-content: space-between; width: 17px; background: #f0f0f0; }
.dscroll .up::after { border-bottom-color: #888; }
.dscroll .down::after { border-top-color: #888; }
.facts { display: flex; flex-direction: column; gap: 10px; padding: 5px 0 0; }
.gdb { align-items: flex-end; margin-right: -2px; }
.path { flex: 1; white-space: nowrap; }
.browse { display: grid; place-items: center; width: 22px; height: 22px; border: 1px solid #777; border-radius: 2px; background: #ececec; flex: none; }
.paths input { appearance: none; width: 13px; height: 13px; margin: 0 3px 0 1px; border: 1px solid #8e8f8f; background: linear-gradient(135deg, #ccc, #fff); }
.thumbs { gap: 9px; padding: 6px 0 0 0; }
.thumbs .lab { width: 80px; padding-top: 8px; }
.btn { flex: 1; height: 21px; border: 1px solid #707070; border-radius: 3px; background: linear-gradient(#f4f4f4, #ececec 48%, #dcdcdc 52%, #cfcfcf); }
.btn:disabled { color: #8b8b8b; border-color: #b5b8bb; background: #f4f4f4; }
.actions { display: flex; justify-content: flex-end; gap: 9px; padding-top: 9px; margin-right: -1px; }
.actions .btn { flex: none; width: 73px; }
```
